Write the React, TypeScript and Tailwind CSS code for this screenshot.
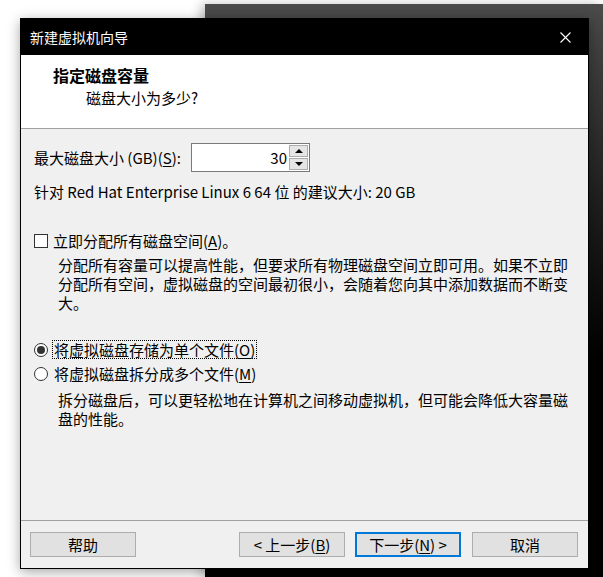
import React from "react";

const U = ({ children }: { children: React.ReactNode }) => (
  <span className="underline underline-offset-2">{children}</span>
);

function Button({
  children,
  primary,
  className = "",
}: {
  children: React.ReactNode;
  primary?: boolean;
  className?: string;
}) {
  return (
    <div
      className={
        "flex h-[25px] w-[106px] shrink-0 items-center justify-center bg-[#e1e1e1] text-[15px] leading-[18px] text-black " +
        (primary ? "border-2 border-[#0078d7] " : "border border-[#adadad] ") +
        className
      }
    >
      {children}
    </div>
  );
}

export default function App() {
  return (
    <div
      className="relative h-[577px] w-[603px] overflow-hidden bg-white text-black"
      style={{ fontFamily: '"Noto Sans CJK SC", "Noto Sans", sans-serif' }}
    >
      {/* background window */}
      <div className="absolute bottom-0 left-[205px] right-0 top-[4px] bg-[linear-gradient(to_bottom,#4b4b4b_0px,#3c3c3c_60px,#1a1a1a_220px,#000_360px)] shadow-[-4px_0_10px_rgba(0,0,0,0.25)]" />

      {/* dialog */}
      <div className="absolute left-[20px] top-[18px] flex h-[551px] w-[569px] flex-col border border-black bg-[#f0f0f0] shadow-[0_3px_12px_rgba(0,0,0,0.35)]">
        {/* title bar */}
        <div className="flex h-[36px] shrink-0 items-center justify-between bg-black pl-[9px] pr-[17px]">
          <span className="text-[14px] leading-[18px] text-white">新建虚拟机向导</span>
          <svg width="11" height="11" viewBox="0 0 11 11">
            <path d="M0.5 0.5L10.5 10.5M10.5 0.5L0.5 10.5" stroke="white" strokeWidth="1.1" />
          </svg>
        </div>

        {/* header */}
        <div className="h-[74px] shrink-0 border-b border-[#a0a0a0] bg-white pl-[32px] pt-[10px]">
          <div className="text-[16px] font-bold leading-[20px]">指定磁盘容量</div>
          <div className="mt-[3px] pl-[33px] text-[15px] leading-[20px]">磁盘大小为多少?</div>
        </div>

        {/* body */}
        <div className="flex flex-1 flex-col pl-[13px] pt-[14px] text-[15px] leading-[19px]">
          <div className="flex items-center">
            <span className="w-[157px] shrink-0">
              最大磁盘大小 (GB)(<U>S</U>):
            </span>
            <div className="flex h-[29px] w-[119px] shrink-0 items-stretch border border-[#7a7a7a] bg-white p-px">
              <div className="flex flex-1 items-center justify-end pr-[2px]">30</div>
              <div className="flex w-[19px] flex-col gap-px">
                <div className="flex flex-1 items-center justify-center border border-[#adadad] bg-[#e5e5e5]">
                  <svg width="8" height="4" viewBox="0 0 8 4">
                    <path d="M0 4L4 0L8 4Z" fill="black" />
                  </svg>
                </div>
                <div className="flex flex-1 items-center justify-center border border-[#adadad] bg-[#e5e5e5]">
                  <svg width="8" height="4" viewBox="0 0 8 4">
                    <path d="M0 0L4 4L8 0Z" fill="black" />
                  </svg>
                </div>
              </div>
            </div>
          </div>

          <div className="mt-[10px]">针对 Red Hat Enterprise Linux 6 64 位 的建议大小: 20 GB</div>

          <div className="mt-[30px] flex items-center">
            <div className="h-[14px] w-[14px] shrink-0 border border-[#333333] bg-white" />
            <span className="ml-[5px]">
              立即分配所有磁盘空间(<U>A</U>)。
            </span>
          </div>
          <div className="ml-[24px] mt-[5px] whitespace-nowrap">
            <div>分配所有容量可以提高性能，但要求所有物理磁盘空间立即可用。如果不立即</div>
            <div>分配所有空间，虚拟磁盘的空间最初很小，会随着您向其中添加数据而不断变</div>
            <div>大。</div>
          </div>

          <div className="mt-[28px] flex items-center">
            <div className="flex h-[14px] w-[14px] shrink-0 items-center justify-center rounded-full border border-[#333333] bg-white">
              <div className="h-[8px] w-[8px] rounded-full bg-[#333333]" />
            </div>
            <span className="ml-[4px] border border-dotted border-black px-px leading-[17px]">
              将虚拟磁盘存储为单个文件(<U>O</U>)
            </span>
          </div>
          <div className="mt-[5px] flex items-center">
            <div className="h-[14px] w-[14px] shrink-0 rounded-full border border-[#333333] bg-white" />
            <span className="ml-[6px]">
              将虚拟磁盘拆分成多个文件(<U>M</U>)
            </span>
          </div>
          <div className="ml-[24px] mt-[7px] whitespace-nowrap">
            <div>拆分磁盘后，可以更轻松地在计算机之间移动虚拟机，但可能会降低大容量磁</div>
            <div>盘的性能。</div>
          </div>
        </div>

        {/* footer */}
        <div className="flex h-[48px] shrink-0 border-t border-[#a0a0a0] pl-[9px] pr-[10px] pt-[11px]">
          <Button>帮助</Button>
          <div className="flex-1" />
          <Button>
            &lt; 上一步(<U>B</U>)
          </Button>
          <Button primary className="ml-[10px]">
            下一步(<U>N</U>) &gt;
          </Button>
          <Button className="ml-[11px]">取消</Button>
        </div>
      </div>
    </div>
  );
}
